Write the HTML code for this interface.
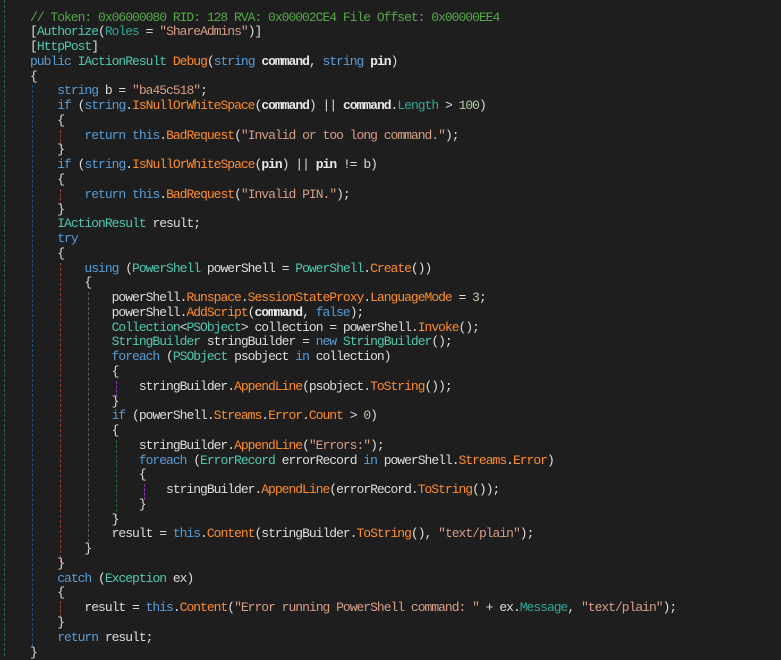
<!DOCTYPE html>
<html><head><meta charset="utf-8"><style>
html,body{margin:0;padding:0;background:#1e1e1e;width:781px;height:656px;overflow:hidden}
pre{position:absolute;left:30px;top:10.6px;margin:0;font-family:"Liberation Mono",monospace;font-size:13px;letter-spacing:-1px;line-height:14.76px;color:#dcdcdc}
.k{color:#569cd6}.t{color:#4ec9b0}.m{color:#ff8c26}.s{color:#d69d85}.c{color:#57a64a}.p{color:#2ea898}.n{color:#b5cea8}.b{font-weight:bold;color:#e8e8e8}
.g{position:absolute;width:0;border-left:1px dashed}
</style></head><body>
<div class="g" style="left:4px;top:0;height:656px;border-color:#2a6a4a"></div>
<div class="g" style="left:32px;top:85px;height:561px;border-color:#1f4f7e"></div>
<div class="g" style="left:60px;top:130px;height:16px;border-color:#9a3a3a"></div>
<div class="g" style="left:60px;top:189px;height:16px;border-color:#9a3a3a"></div>
<div class="g" style="left:60px;top:263px;height:300px;border-color:#9a3a3a"></div>
<div class="g" style="left:60px;top:601px;height:16px;border-color:#9a3a3a"></div>
<div class="g" style="left:88px;top:292px;height:255px;border-color:#5a5a5a"></div>
<div class="g" style="left:116px;top:381px;height:16px;border-color:#8a3ab0"></div>
<div class="g" style="left:116px;top:440px;height:77px;border-color:#2a6a3a"></div>
<div class="g" style="left:144px;top:484px;height:16px;border-color:#8a3ab0"></div>
<pre><span class="c">// Token: 0x06000080 RID: 128 RVA: 0x00002CE4 File Offset: 0x00000EE4</span>
[<span class="t">Authorize</span>(<span class="p">Roles</span> = <span class="s">"ShareAdmins"</span>)]
[<span class="t">HttpPost</span>]
<span class="k">public</span> <span class="t">IActionResult</span> <span class="m">Debug</span>(<span class="k">string</span> <span class="b">command</span>, <span class="k">string</span> <span class="b">pin</span>)
{
    <span class="k">string</span> b = <span class="s">"ba45c518"</span>;
    <span class="k">if</span> (<span class="k">string</span>.<span class="m">IsNullOrWhiteSpace</span>(<span class="b">command</span>) || <span class="b">command</span>.<span class="p">Length</span> &gt; <span class="n">100</span>)
    {
        <span class="k">return</span> <span class="k">this</span>.<span class="m">BadRequest</span>(<span class="s">"Invalid or too long command."</span>);
    }
    <span class="k">if</span> (<span class="k">string</span>.<span class="m">IsNullOrWhiteSpace</span>(<span class="b">pin</span>) || <span class="b">pin</span> != b)
    {
        <span class="k">return</span> <span class="k">this</span>.<span class="m">BadRequest</span>(<span class="s">"Invalid PIN."</span>);
    }
    <span class="t">IActionResult</span> result;
    <span class="k">try</span>
    {
        <span class="k">using</span> (<span class="t">PowerShell</span> powerShell = <span class="t">PowerShell</span>.<span class="m">Create</span>())
        {
            powerShell.<span class="m">Runspace</span>.<span class="m">SessionStateProxy</span>.<span class="m">LanguageMode</span> = <span class="n">3</span>;
            powerShell.<span class="m">AddScript</span>(<span class="b">command</span>, <span class="k">false</span>);
            <span class="t">Collection</span>&lt;<span class="t">PSObject</span>&gt; collection = powerShell.<span class="m">Invoke</span>();
            <span class="t">StringBuilder</span> stringBuilder = <span class="k">new</span> <span class="t">StringBuilder</span>();
            <span class="k">foreach</span> (<span class="t">PSObject</span> psobject <span class="k">in</span> collection)
            {
                stringBuilder.<span class="m">AppendLine</span>(psobject.<span class="m">ToString</span>());
            }
            <span class="k">if</span> (powerShell.<span class="m">Streams</span>.<span class="m">Error</span>.<span class="m">Count</span> &gt; <span class="n">0</span>)
            {
                stringBuilder.<span class="m">AppendLine</span>(<span class="s">"Errors:"</span>);
                <span class="k">foreach</span> (<span class="t">ErrorRecord</span> errorRecord <span class="k">in</span> powerShell.<span class="m">Streams</span>.<span class="m">Error</span>)
                {
                    stringBuilder.<span class="m">AppendLine</span>(errorRecord.<span class="m">ToString</span>());
                }
            }
            result = <span class="k">this</span>.<span class="m">Content</span>(stringBuilder.<span class="m">ToString</span>(), <span class="s">"text/plain"</span>);
        }
    }
    <span class="k">catch</span> (<span class="t">Exception</span> ex)
    {
        result = <span class="k">this</span>.<span class="m">Content</span>(<span class="s">"Error running PowerShell command: "</span> + ex.<span class="p">Message</span>, <span class="s">"text/plain"</span>);
    }
    <span class="k">return</span> result;
}</pre>
</body></html>
